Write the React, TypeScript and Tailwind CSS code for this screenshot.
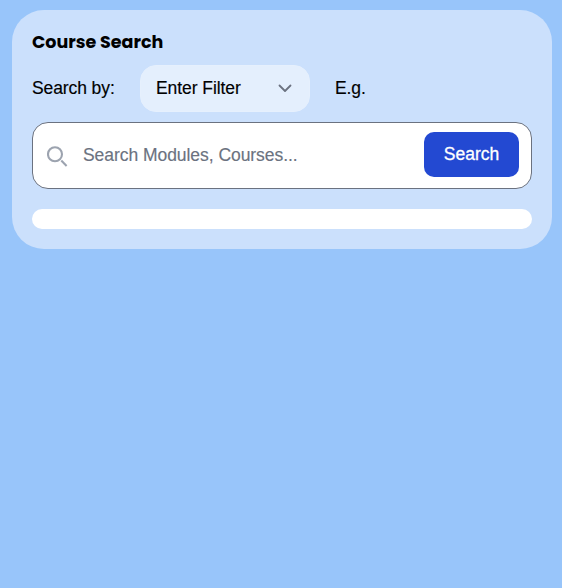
export default function App() {
  return (
    <main className="min-h-screen bg-[#98c5fa] pl-3 pr-[10px] pt-[10px] font-['Liberation_Sans',Arial,sans-serif] text-black">
      <section className="h-[239px] rounded-[32px] bg-[#cbe0fc] px-5 pt-5">
        <h1 className="h-[24px] whitespace-nowrap font-['Poppins','Open_Sans',sans-serif] text-[17.5px] font-bold leading-[24px]">Course Search</h1>
        <div className="mt-[11px] flex h-[47px] items-center text-[17.5px] tracking-[-0.1px] [-webkit-text-stroke:0.15px]">
          <span className="w-[108px] whitespace-nowrap">Search by:</span>
          <button type="button" className="flex h-[47px] w-[170px] items-center justify-between rounded-2xl border border-[#e6f0fd] bg-[#e4effd] pl-[15px] pr-[17px] tracking-[-0.07px]">
            <span>Enter Filter</span>
            <svg className="-mt-px" width="14" height="9" viewBox="0 0 14 9" fill="none" stroke="#6b7280" strokeWidth="1.8" strokeLinecap="round" strokeLinejoin="round"><path d="m1.5 1.5 5.5 5.5 5.5-5.5" /></svg>
          </button>
          <span className="ml-[25px]">E.g.</span>
        </div>
        <form className="mt-[10px] flex h-[67px] items-center rounded-2xl border border-[#6b7280] bg-white pl-[14px] pr-3 tracking-[-0.05px]">
          <svg className="mt-[2px]" width="22" height="22" viewBox="0 0 22 22" fill="none" stroke="#9ca3af" strokeWidth="2.1"><circle cx="8" cy="8.3" r="7" /><path d="m14.3 14.6 5.3 5.3" /></svg>
          <span className="ml-[14px] flex-1 whitespace-nowrap text-[17.5px] text-[#6b7280] [-webkit-text-stroke:0.15px]">Search Modules, Courses...</span>
          <button type="button" className="mb-[2px] h-[45px] w-[95px] rounded-[10px] bg-[#2349d2] text-[17.5px] tracking-[-0.03px] text-white [-webkit-text-stroke:0.3px]">Search</button>
        </form>
        <div className="mt-5 h-5 rounded-[10px] bg-white" />
      </section>
    </main>
  );
}
